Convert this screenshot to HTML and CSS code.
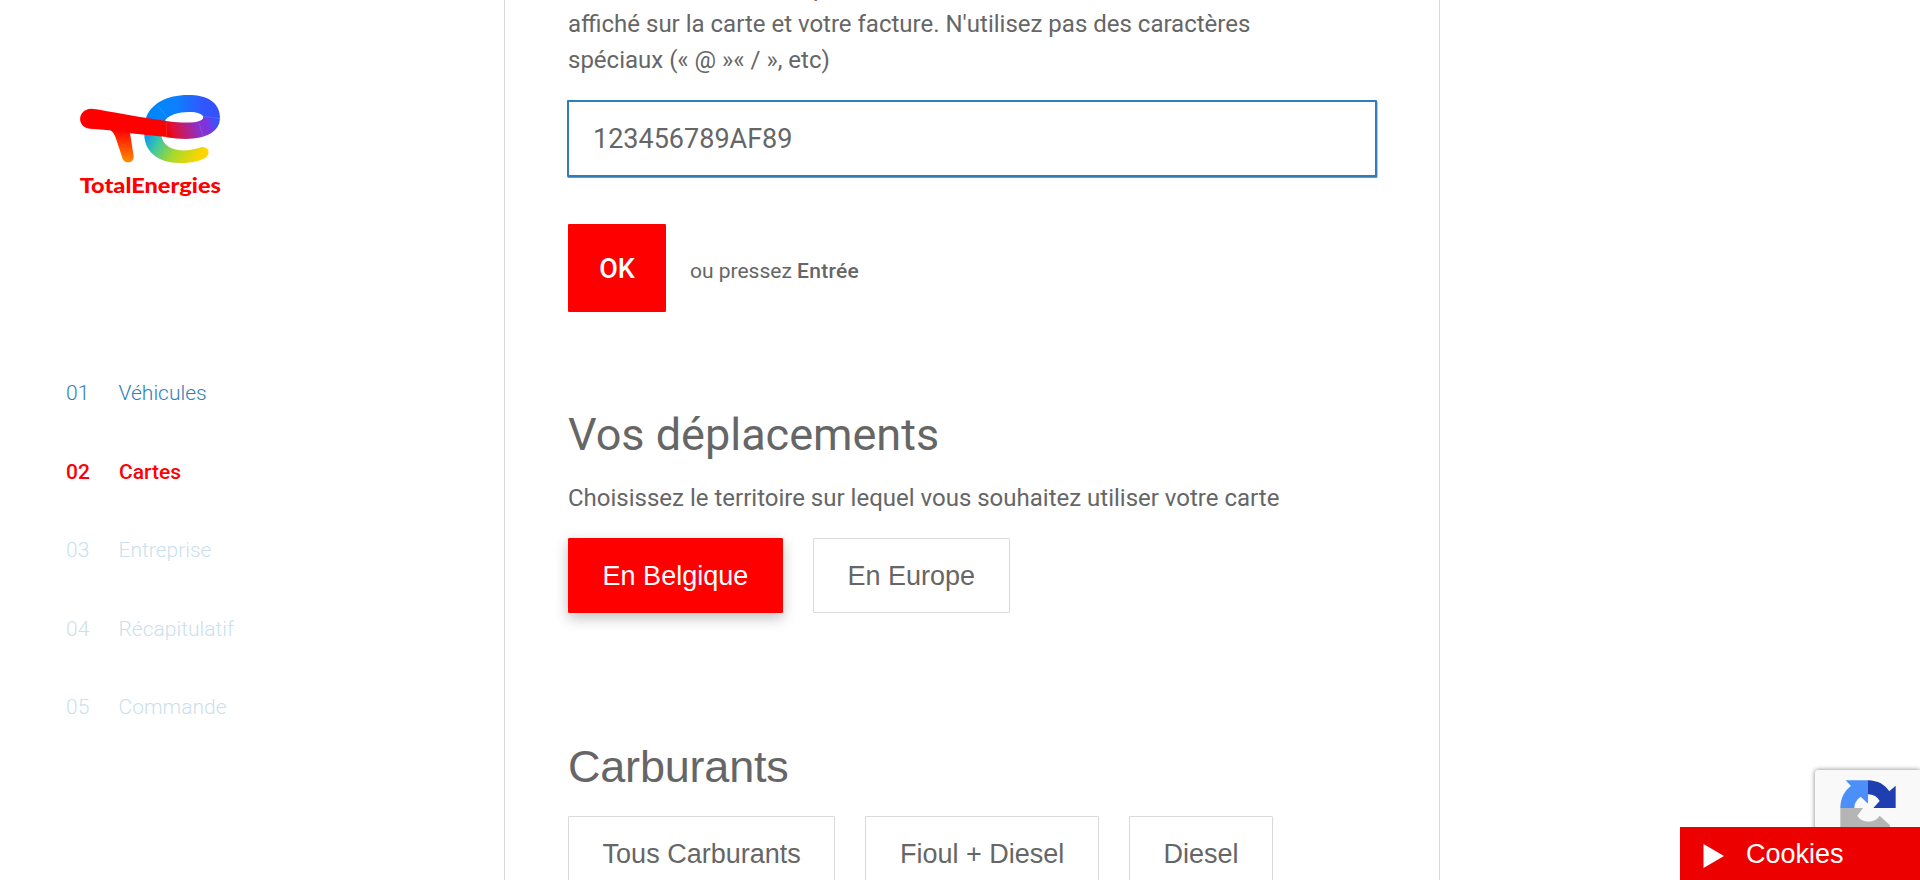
FILE: index.html
```html
<!DOCTYPE html>
<html lang="fr">
<head>
<meta charset="utf-8">
<title>TotalEnergies - Cartes</title>
<link rel="stylesheet" href="styles.css">
</head>
<body>
<div class="page">
  <aside class="sidebar">
    <svg class="logo" viewBox="0 0 540 390" role="img" aria-label="TotalEnergies">
      <defs>
        <linearGradient id="top" gradientUnits="userSpaceOnUse" x1="290" y1="0" x2="480" y2="0"><stop offset="0" stop-color="#0086fa"/><stop offset=".3" stop-color="#0d80ff"/><stop offset=".75" stop-color="#3255ff"/><stop offset="1" stop-color="#3450ff"/></linearGradient>
        <linearGradient id="low" gradientUnits="userSpaceOnUse" x1="255" y1="150" x2="410" y2="245"><stop offset="0" stop-color="#008cff"/><stop offset=".28" stop-color="#3dc7a5"/><stop offset=".6" stop-color="#a6d92b"/><stop offset="1" stop-color="#ffd500"/></linearGradient>
        <linearGradient id="bar" gradientUnits="userSpaceOnUse" x1="320" y1="150" x2="464" y2="106"><stop offset="0" stop-color="#f00000"/><stop offset=".13" stop-color="#e11035"/><stop offset=".65" stop-color="#8732d2"/><stop offset=".82" stop-color="#7b35df"/><stop offset="1" stop-color="#3653ff"/></linearGradient>
        <linearGradient id="leg" x1="0" y1="0" x2="0" y2="1"><stop offset="0" stop-color="#f00"/><stop offset=".3" stop-color="#ff2600"/><stop offset="1" stop-color="#ff8c00"/></linearGradient>
      </defs>
      <path fill="url(#low)" d="M253 150C249 209 290 246 360 246C393 246 421 240 435 231C458 216 441 191 418 200C357 219 309 205 303 160Z"/>
      <path fill="url(#top)" d="M257 114C271 68 321 42 383 42C446 42 480 66 480 112L430 110C431 85 327 87 314 122Z"/>
      <path fill="url(#bar)" d="M318 120C374 127 428 129 430 108L480 112C479 151 440 174 377 174Q350 174 318 169Z"/>
      <path fill="url(#leg)" d="M145 144Q162 151 169 176L188 233C196 251 223 246 221 226L209 150Z"/>
      <path fill="red" d="M94 83Q103 83 265 112L320 120V168L204 156Q180 148 90 143C50 139 50 86 94 83Z"/>
      <path fill="none" stroke="#a5b0d0" stroke-opacity=".55" stroke-width="1.2" d="M293 74L320 107M429 106L480 112M320 120V168M417 126L429 166"/>
      <text class="logo-name" x="59" y="337" textLength="424" lengthAdjust="spacingAndGlyphs">TotalEnergies</text>
    </svg>
    <nav class="steps">
      <a class="step done"><span class="num">01</span><span>Véhicules</span></a>
      <a class="step active"><span class="num">02</span><span>Cartes</span></a>
      <a class="step"><span class="num">03</span><span>Entreprise</span></a>
      <a class="step"><span class="num">04</span><span>Récapitulatif</span></a>
      <a class="step"><span class="num">05</span><span>Commande</span></a>
    </nav>
  </aside>
  <main class="content">
    <p class="intro">Le nom du conducteur peut être<br>affiché sur la carte et votre facture. N'utilisez pas des caractères<br>spéciaux («&nbsp;@&nbsp;»«&nbsp;/&nbsp;», etc)</p>
    <input class="field" type="text" value="123456789AF89">
    <div class="confirm"><button class="ok">OK</button><span class="hint">ou pressez <b>Entrée</b></span></div>
    <section class="travel">
      <h2 class="title">Vos déplacements</h2>
      <p class="lead">Choisissez le territoire sur lequel vous souhaitez utiliser votre carte</p>
      <div class="choices"><button class="choice selected">En Belgique</button><button class="choice">En Europe</button></div>
    </section>
    <section class="fuel">
      <h2 class="title fuel-title">Carburants</h2>
      <div class="choices"><button class="choice">Tous Carburants</button><button class="choice">Fioul + Diesel</button><button class="choice">Diesel</button></div>
    </section>
  </main>
</div>
<div class="captcha">
  <svg class="captcha-icon" viewBox="540 90 168 150">
    <path fill="#b5b5b5" d="M541 174H609L592 197C603 219 647 221 659 197L690 226V240H541Z"/>
    <path fill="#4c8ff8" d="M541 174C542 143 553 123 573 108L557 91H624V161L602 140Q583 153 583 174Z"/>
    <path fill="#1f3fb0" d="M624 91C654 92 675 104 688 124L707 107V174H640L659 153Q649 134 624 133Z"/>
  </svg>
</div>
<div class="cookies"><svg class="play" viewBox="0 0 20 24"><path fill="#fff" d="M0 0L20.5 12L0 24Z"/></svg><span>Cookies</span></div>
</body>
</html>
```
FILE: styles.css
```css
* { box-sizing: border-box; }
body { margin: 0; height: 880px; overflow: hidden; background: #fff; color: #666; font-family: Roboto, sans-serif; }
.page { display: flex; height: 880px; overflow: hidden; }
.sidebar { width: 504px; flex: none; padding: 80.5px 0 0 60px; }
.logo { display: block; width: 180px; height: 130px; }
.logo-name { font: 900 61px Lato, sans-serif; fill: #f00; }
.steps { padding: 143.5px 0 0 6px; }
.step { display: flex; height: 78.5px; line-height: 78.5px; font-size: 21px; font-weight: 300; color: #cbdfee; }
.num { width: 52.5px; }
.done { color: #2f7eb9; }
.active { color: #f00; font-weight: 500; }
.active .num { width: 53px; }
.content { width: 936px; flex: none; height: 880px; overflow: hidden; padding: 0 62px; border: 1px solid #dadada; border-width: 0 1px; }
.intro { margin: -30px 0 0 1px; font-size: 24px; line-height: 36px; white-space: nowrap; }
.field { display: block; width: 810px; height: 77px; margin-top: 22px; padding: 1px 24px 0; border: 2px solid #2f7eb9; border-radius: 1px; outline: none; box-shadow: .5px 1px 0 #5b9bc9; color: #666; font: 27px Roboto, sans-serif; }
.confirm { display: flex; align-items: center; margin: 47px 0 0 1px; height: 88px; }
.ok { width: 98px; height: 88px; padding: 2px 0 0; border: 0; border-radius: 1px; background: #f00; color: #fff; font: 500 27px Roboto, sans-serif; }
.hint { margin: 5px 0 0 24px; font-size: 21px; }
.hint b { font-weight: 500; letter-spacing: .3px; }
.travel { margin: 93px 0 0 1px; }
.title { margin: 0; font-size: 45px; line-height: 60px; font-weight: 400; }
.lead { margin: 15px 0 22px; font-size: 24px; line-height: 36px; }
.choices { display: flex; gap: 30px; }
.choice { height: 75px; padding: 1px 33.6px 0; border: 1px solid #dadada; border-radius: 1px; background: #fff; color: #666; font: 27px "Liberation Sans", Arial, sans-serif; }
.selected { border-color: #f00; background: #f00; color: #fff; box-shadow: 0 5px 14px rgba(0, 0, 0, .25); }
.fuel { margin: 124px 0 0 1px; }
.fuel-title { margin-bottom: 19px; font-family: "Liberation Sans", Arial, sans-serif; letter-spacing: -.2px; }
.captcha { position: absolute; right: 0; bottom: 0; width: 105px; height: 110px; padding: 10px 25px; border-radius: 3px 0 0 3px; background: #f9f9f9; box-shadow: 0 0 5px gray; }
.captcha-icon { display: block; width: 56px; height: 50px; }
.cookies { position: absolute; right: 0; bottom: 0; width: 240px; height: 53px; padding: 1px 0 0 23px; display: flex; align-items: center; background: #ed0000; color: #fff; font: 27px "Liberation Sans", Arial, sans-serif; }
.play { width: 21px; height: 24px; margin: 4px 22px 0 0; }
```
